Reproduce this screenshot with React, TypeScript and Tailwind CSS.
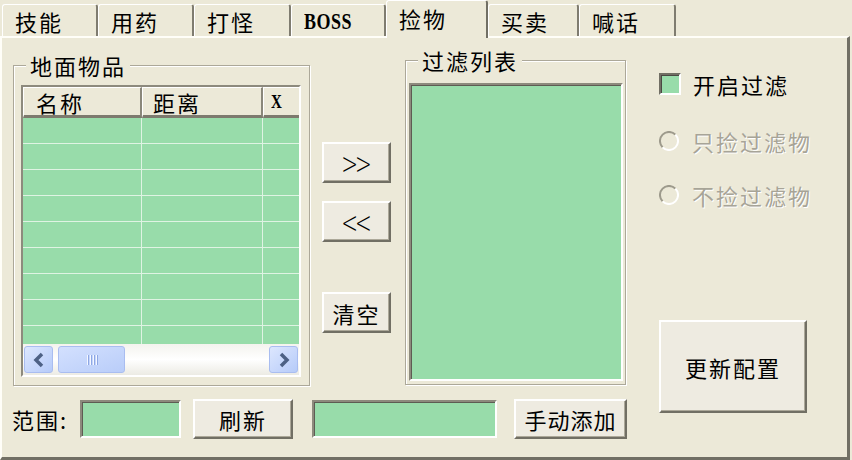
import React from "react";

const tabs = [
  { label: "技能", w: "w-[96px]" },
  { label: "用药", w: "w-[96px]" },
  { label: "打怪", w: "w-[97px]" },
  { label: "BOSS", w: "w-[95px]" },
  { label: "捡物", w: "w-[102px]", active: true },
  { label: "买卖", w: "w-[91px]" },
  { label: "喊话", w: "w-[97px]" },
];

const raised =
  "bg-[#eeebe1] border-2 border-t-white border-l-white border-r-[#716f64] border-b-[#716f64] shadow-[inset_-1px_-1px_0_#aca899]";
const sunken =
  "bg-[#98dcaa] border-2 border-t-[#8d8a7d] border-l-[#8d8a7d] border-r-white border-b-white shadow-[inset_1px_1px_0_#5e5c53]";

const Tab = ({ label, w, active }: { label: string; w: string; active?: boolean }) => {
  const isLatin = label === "BOSS";
  return (
    <div
      className={`${w} flex items-center pl-[12px] border-l border-t border-l-white border-t-white border-r-2 rounded-t-[3px] ${
        active
          ? "h-[38px] -mb-[2px] pb-[3px] relative z-10 bg-[#ece9d8] border-r-[#716f64]"
          : "h-[32px] border-r-[#7f7c70]"
      }`}
    >
      {isLatin ? (
        <span className="font-['Liberation_Serif',serif] font-bold text-[18px] tracking-[0.5px] scale-y-[1.3] inline-block">
          {label}
        </span>
      ) : (
        <span>{label}</span>
      )}
    </div>
  );
};

const Button = ({ label, className }: { label: string; className: string }) => (
  <div className={`${raised} ${className} flex items-center justify-center`}>{label}</div>
);

const Chevrons = ({ text, className }: { text: string; className: string }) => (
  <div className={`${raised} ${className} flex items-center justify-center`}>
    <span className="font-['DejaVu_Sans',sans-serif] font-light text-[20px] tracking-[-3px] scale-y-150 inline-block pr-[3px]">
      {text}
    </span>
  </div>
);

const ScrollArrow = ({ dir }: { dir: "left" | "right" }) => (
  <div className="w-[29px] h-[27px] rounded-[3px] border border-[#a9bdf0] bg-gradient-to-br from-[#dde7fe] to-[#b6cbf9] flex items-center justify-center">
    <svg width="14" height="16" viewBox="0 0 14 16">
      <path
        d={dir === "left" ? "M10 2 L4 8 L10 14" : "M4 2 L10 8 L4 14"}
        fill="none"
        stroke="#4d6185"
        strokeWidth="3.5"
      />
    </svg>
  </div>
);

const Radio = () => (
  <svg width="20" height="20" viewBox="0 0 20 20">
    <path d="M3.6 16.4 A9 9 0 0 1 16.4 3.6" fill="none" stroke="#9d9a8c" strokeWidth="2" />
    <path d="M16.4 3.6 A9 9 0 0 1 3.6 16.4" fill="none" stroke="#ffffff" strokeWidth="2" />
    <circle cx="10" cy="10" r="7" fill="#ece9d8" />
  </svg>
);

const ListView = () => (
  <div className="w-[280px] h-[292px] border-2 border-t-[#8d8a7d] border-l-[#8d8a7d] border-r-white border-b-white flex flex-col bg-[#98dcaa] overflow-hidden">
    <div className="h-[31px] flex shrink-0">
      <div className="w-[119px] flex items-center pl-[12px] bg-[#ece9d8] border-t border-l border-t-white border-l-white border-r-2 border-b-[3px] border-r-[#8a877a] border-b-[#7d7a6e]">
        名称
      </div>
      <div className="w-[121px] flex items-center pl-[10px] bg-[#ece9d8] border-t border-l border-t-white border-l-white border-r-2 border-b-[3px] border-r-[#8a877a] border-b-[#7d7a6e]">
        距离
      </div>
      <div className="flex-1 flex items-center pl-[7px] bg-[#ece9d8] border-t border-l border-t-white border-l-white border-b-[3px] border-b-[#7d7a6e]">
        <span className="font-['Liberation_Serif',serif] font-bold text-[15px] scale-y-125 inline-block">X</span>
      </div>
    </div>
    <div className="flex-1 overflow-hidden">
      {Array.from({ length: 9 }).map((_, i) => (
        <div key={i} className="h-[26px] flex border-b border-[#dff3e3]">
          <div className="w-[119px] border-r border-[#dff3e3]" />
          <div className="w-[121px] border-r border-[#dff3e3]" />
          <div className="flex-1" />
        </div>
      ))}
    </div>
    <div className="h-[31px] shrink-0 flex items-center px-[1px] bg-gradient-to-b from-[#f4f3ee] via-white to-[#ecebe4]">
      <ScrollArrow dir="left" />
      <div className="ml-[5px] w-[67px] h-[27px] rounded-[3px] border border-[#a9bdf0] bg-gradient-to-br from-[#d3e0fe] to-[#b9cdf9] flex items-center justify-center gap-[2px]">
        {[0, 1, 2, 3].map((i) => (
          <div key={i} className="w-[1px] h-[10px] bg-[#f4f7ff] shadow-[1px_0_0_#8ea7e4]" />
        ))}
      </div>
      <div className="flex-1" />
      <ScrollArrow dir="right" />
    </div>
  </div>
);

export default function App() {
  return (
    <div className="w-[852px] h-[460px] bg-[#ece9d8] overflow-hidden text-black text-[22px] leading-[24px] tracking-[2px] font-['Noto_Sans_CJK_SC','Liberation_Sans',sans-serif]">
      <div className="h-[36px] flex items-end pl-[2px]">
        {tabs.map((t) => (
          <Tab key={t.label} {...t} />
        ))}
      </div>

      <div className="h-[424px] w-[850px] flex border-t-2 border-l-2 border-t-[#fffef8] border-l-[#fffef8] border-r-[3px] border-b-[3px] border-r-[#716f64] border-b-[#716f64]">
        <div className="w-[638px] flex flex-col">
          <div className="h-[361px] flex items-start">
            <fieldset className="ml-[11px] mt-[15px] w-[297px] border border-[#aca899] shadow-[inset_1px_1px_0_#fff,1px_1px_0_#fff] pb-[8px]">
              <legend className="ml-[12px] px-[4px] bg-[#ece9d8]">地面物品</legend>
              <div className="ml-[7px] mt-[8px]">
                <ListView />
              </div>
            </fieldset>

            <div className="ml-[12px] mt-[104px] w-[69px] flex flex-col">
              <Chevrons text="&gt;&gt;" className="h-[41px]" />
              <Chevrons text="&lt;&lt;" className="mt-[18px] h-[41px]" />
              <Button label="清空" className="mt-[50px] h-[41px]" />
            </div>

            <fieldset className="ml-[14px] mt-[10px] w-[221px] border border-[#aca899] shadow-[inset_1px_1px_0_#fff,1px_1px_0_#fff] pb-[3px]">
              <legend className="ml-[12px] px-[4px] bg-[#ece9d8]">过滤列表</legend>
              <div className="ml-[3px] mt-[11px] w-[214px] h-[298px] bg-[#98dcaa] border-2 border-t-[#8d8a7d] border-l-[#8d8a7d] border-r-white border-b-white shadow-[inset_1px_1px_0_#5e5c53]" />
            </fieldset>
          </div>

          <div className="h-[40px] flex items-center">
            <span className="ml-[10px] w-[68px]">范围:</span>
            <div className={`${sunken} w-[101px] h-[38px]`} />
            <Button label="刷新" className="ml-[12px] w-[100px] h-[40px]" />
            <div className={`${sunken} ml-[19px] w-[185px] h-[38px]`} />
            <Button label="手动添加" className="ml-[17px] w-[113px] h-[40px] tracking-[1px]" />
          </div>
        </div>

        <div className="flex-1 flex flex-col pt-[34px] pl-[19px]">
          <div className="h-[24px] flex items-center">
            <div className="w-[22px] h-[22px] bg-[#98dcaa] border-2 border-t-[#716f64] border-l-[#716f64] border-r-white border-b-white shadow-[inset_1px_1px_0_#4a4943]" />
            <span className="ml-[12px]">开启过滤</span>
          </div>
          <div className="mt-[33px] h-[24px] flex items-center text-[#a7a497] [text-shadow:1px_1px_0_#fff]">
            <Radio />
            <span className="ml-[13px]">只捡过滤物</span>
          </div>
          <div className="mt-[30px] h-[24px] flex items-center text-[#a7a497] [text-shadow:1px_1px_0_#fff]">
            <Radio />
            <span className="ml-[13px]">不捡过滤物</span>
          </div>
          <Button label="更新配置" className="mt-[113px] w-[148px] h-[93px]" />
        </div>
      </div>
    </div>
  );
}
